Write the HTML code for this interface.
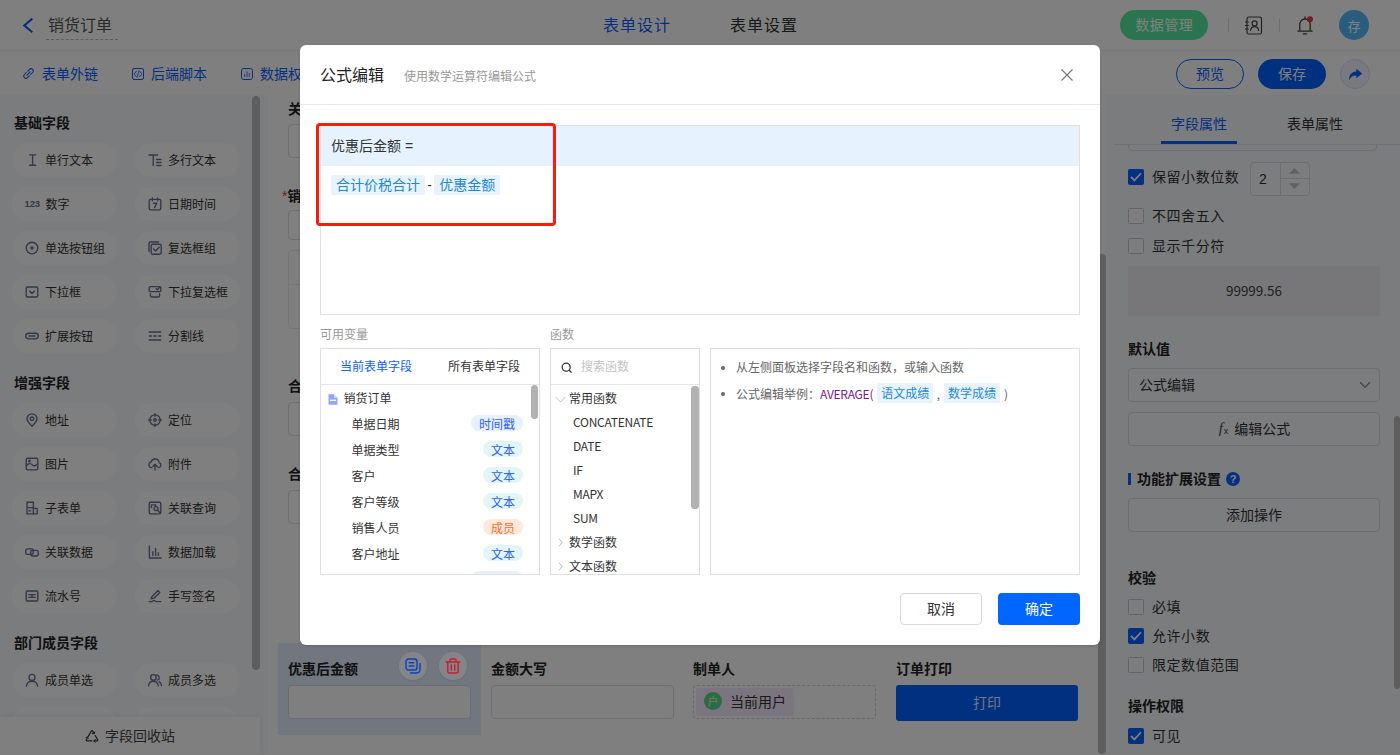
<!DOCTYPE html>
<html lang="zh-CN">
<head>
<meta charset="utf-8">
<title>销货订单 - 表单设计</title>
<style>
*{box-sizing:border-box;margin:0;padding:0}
html,body{width:1400px;height:755px;overflow:hidden}
body{position:relative;font-family:"Liberation Sans","Noto Sans CJK SC",sans-serif;font-size:14px;color:#333;background:#fff}
.a{position:absolute}
.f{display:flex;align-items:center}
.fc{display:flex;align-items:center;justify-content:center}
.u1{padding-bottom:2px}
.u2{padding-bottom:3px}
.nl{font-family:"Noto Sans CJK SC","Liberation Sans",sans-serif}
svg{display:block;overflow:visible}
.b{font-weight:700}
.nw{white-space:nowrap}
/* header */
#hd{left:0;top:0;width:1400px;height:51px;background:#fff;border-bottom:1px solid #f0f0f0}
#tb{left:0;top:51px;width:1400px;height:44px;background:#fff}
.lnk{color:#0b5fff;font-size:14px;height:20px;line-height:20px;white-space:nowrap;top:13px}
/* left */
#lp{left:0;top:95px;width:268px;height:660px;background:#f7f9fc;overflow:hidden}
.st{left:14px;font-weight:700;font-size:14px;color:#222;height:20px;line-height:20px;white-space:nowrap}
.pl{width:105px;height:34px;border-radius:17px;background:#fff;font-size:12px;color:#333;white-space:nowrap;padding-left:13px;padding-bottom:1px;display:flex;align-items:center}
.pl svg{margin-right:6px;flex:none}
.pl svg *{fill:none;stroke:#666e90;stroke-width:1.35;stroke-linecap:round;stroke-linejoin:round}
.c1{left:12px}.c2{left:135px}
/* right */
#rp{left:1106px;top:95px;width:294px;height:660px;background:#f7f9fc;overflow:hidden}
.cb{width:16px;height:16px;border:1px solid #c9c5d8;border-radius:1.500px;background:#fbfbfd;left:22px}
.cb.on{background:#0b5fff;border-color:#0b5fff}
.lb{font-size:14px;color:#333;height:20px;line-height:20px;white-space:nowrap;left:46px;letter-spacing:.55px}
.btn{border:1px solid #dcdde2;border-radius:4px;background:#f9fafc;font-size:14px;color:#333;left:22px;width:252px;height:34px;padding-bottom:3px}
/* modal */
#ov{left:0;top:0;width:1400px;height:755px;background:rgba(0,0,0,.5)}
#md{left:300px;top:45px;width:800px;height:600px;background:#fff;border-radius:6px;overflow:hidden;box-shadow:0 1px 3px rgba(0,0,0,.16)}
.tg{display:inline-block;height:20px;line-height:20px;padding:0 5px;background:#e8f3fd;color:#1e8ad6;border-radius:2px;font-size:14px}
.vr{left:30.500px;font-size:12px;color:#333;height:18px;line-height:18px;white-space:nowrap}
.vt{height:16px;line-height:20px;overflow:hidden;border-radius:8px;font-size:12px;padding:0 8px;right:16px;white-space:nowrap}
.t1{background:#e6f0ff;color:#2e62f5}
.t2{background:#e2f6f6;color:#2e62f5}
.t3{background:#ffe9dd;color:#f2702a}
.fn{font-family:"Noto Sans CJK SC",sans-serif;letter-spacing:-.25px;font-size:12px;color:#333;height:18px;line-height:18px;white-space:nowrap}
</style>
</head>
<body>
<!-- ===== header ===== -->
<div id="hd" class="a">
  <svg class="a" style="left:21px;top:16px" width="14" height="18" viewBox="0 0 14 18"><path d="M11.300 2.600 3.300 9.400l8 6.800" fill="none" stroke="#0b5fff" stroke-width="2.100" stroke-linejoin="miter"/></svg>
  <div class="a nw" style="left:46px;top:12px;width:72px;height:28px;border-bottom:1px dashed #bbb;font-size:16px;line-height:28px;color:#555;padding-left:2px">销货订单</div>
  <div class="a nw" style="left:603px;top:14px;font-size:16px;line-height:24px;letter-spacing:1px;color:#0b5fff">表单设计</div>
  <div class="a nw" style="left:730px;top:14px;font-size:16px;line-height:24px;letter-spacing:1px;color:#333">表单设置</div>
  <div class="a fc nw u1" style="left:1120px;top:10px;width:88px;height:30px;border-radius:15px;background:#55ea9f;color:#fff;font-size:14px;letter-spacing:.5px;padding-left:.5px">数据管理</div>
  <div class="a" style="left:1228px;top:18px;width:1px;height:14px;background:#dcdcdc"></div>
  <!-- contacts icon -->
  <svg class="a" style="left:1243px;top:16px" width="20" height="19" viewBox="0 0 20 19" fill="none" stroke="#444" stroke-width="1.2" stroke-linecap="round" stroke-linejoin="round"><rect x="4" y="1" width="14.5" height="17" rx="1.8"/><path d="M2.400 6h3M2.400 9.500h3M2.400 13h3" stroke-width="1"/><circle cx="11.6" cy="7.4" r="2.5"/><path d="M7.6 14.4c.3-2.4 2-3.8 4-3.8s3.700 1.400 4 3.800"/></svg>
  <div class="a" style="left:1279px;top:18px;width:1px;height:14px;background:#dcdcdc"></div>
  <!-- bell -->
  <svg class="a" style="left:1296px;top:15px" width="18" height="20" viewBox="0 0 18 20" fill="none" stroke="#444" stroke-width="1.3" stroke-linecap="round" stroke-linejoin="round"><path d="M2 16.200h14M3.800 16V9.200a5.200 5.200 0 0 1 10.400 0V16M9 2v2M7.300 18.800h3.400"/><circle cx="14" cy="4.200" r="3" fill="#f0353a" stroke="none"/></svg>
  <div class="a fc" style="left:1339px;top:10px;width:30px;height:30px;border-radius:15px;background:#54b8ff;color:#fff;font-size:13px">存</div>
</div>
<!-- ===== toolbar ===== -->
<div id="tb" class="a">
  <svg class="a" style="left:22px;top:16px" width="13" height="13" viewBox="0 0 13 13" fill="none" stroke="#0b5fff" stroke-width="1" stroke-linecap="round"><g transform="rotate(-45 6.500 6.500)"><path d="M5.600 4.300H2.900a2.200 2.200 0 0 0 0 4.400h2.700M7.400 4.300h2.700a2.200 2.200 0 0 1 0 4.400H7.400M4.200 6.500h4.600"/></g></svg>
  <div class="a lnk" style="left:42px">表单外链</div>
  <svg class="a" style="left:132px;top:17px" width="12" height="12" viewBox="0 0 12 12" fill="none" stroke="#0b5fff" stroke-width=".900" stroke-linecap="round" stroke-linejoin="round"><rect x=".5" y=".500" width="11" height="11" rx="1.600" stroke-width="1"/><path d="M4.300 3.400 2.200 6l2.100 2.600M7.700 3.400 9.800 6 7.700 8.600M6.800 3 5.200 9" stroke-width=".800"/></svg>
  <div class="a lnk" style="left:151px">后端脚本</div>
  <svg class="a" style="left:241px;top:17px" width="12" height="12" viewBox="0 0 12 12" fill="none" stroke="#0b5fff" stroke-width=".900" stroke-linecap="round" stroke-linejoin="round"><rect x=".5" y=".500" width="11" height="11" rx="2.200" stroke-width="1"/><path d="M3.700 8.600V6.400M6 8.600V3.800M8.300 8.600V5.400" stroke-width=".800"/></svg>
  <div class="a lnk" style="left:260px">数据权限</div>
  <div class="a fc nw u1" style="left:1176px;top:8px;width:68px;height:30px;border-radius:15px;border:1px solid #0b5fff;color:#0b5fff;font-size:14px;background:#fff">预览</div>
  <div class="a fc nw u1" style="left:1258px;top:8px;width:68px;height:30px;border-radius:15px;background:#0060ff;color:#fff;font-size:14px">保存</div>
  <div class="a fc" style="left:1340px;top:8px;width:30px;height:30px;border-radius:15px;background:#f1f5ff;border:1px solid #d4e0fb">
    <svg width="15" height="13" viewBox="0 0 15 13"><path d="M8.300.8 14.200 5.600 8.300 10.300V7.400C4.600 7.300 2.400 9 .9 12.200 1 7.400 3.600 3.900 8.300 3.600z" fill="#0b5fff"/></svg>
  </div>
</div>
<!-- ===== left panel ===== -->
<div id="lp" class="a">
  <div class="a st" style="top:18px">基础字段</div>
  <div class="a pl c1" style="top:48px"><svg width="14" height="14" viewBox="0 0 14 14"><path d="M4.600 1.800h6M4.600 12.200h6M7.600 1.800v10.400"/></svg>单行文本</div>
  <div class="a pl c2" style="top:48px"><svg width="14" height="14" viewBox="0 0 14 14"><path d="M1 2h8.500M5.200 2v10.500M8.500 6.500h4.500M8.500 9.500h4.500M8.500 12.500h4.500"/></svg>多行文本</div>
  <div class="a pl c1" style="top:92px"><span style="font:700 9.500px/14px 'Liberation Sans',sans-serif;color:#666e90;width:15px;flex:none;margin-right:6px;letter-spacing:-.1px;margin-left:-.5px">123</span>数字</div>
  <div class="a pl c2" style="top:92px"><svg width="14" height="14" viewBox="0 0 14 14"><rect x="1.200" y="2.400" width="11.600" height="10.400" rx="1.600"/><path d="M4.400 1v2.800M9.600 1v2.800M5.400 6.200h3.400L6.600 10.600"/></svg>日期时间</div>
  <div class="a pl c1" style="top:136px"><svg width="14" height="14" viewBox="0 0 14 14"><circle cx="7" cy="7" r="5.800"/><circle cx="7" cy="7" r="1.100" style="fill:#666e90"/></svg>单选按钮组</div>
  <div class="a pl c2" style="top:136px"><svg width="14" height="14" viewBox="0 0 14 14"><rect x="3.200" y="3.200" width="10" height="10" rx="1.400"/><path d="M1 10.500V2.200A1.200 1.200 0 0 1 2.200 1H10.500M5.600 8l2 2 3.600-3.800"/></svg>复选框组</div>
  <div class="a pl c1" style="top:180px"><svg width="14" height="14" viewBox="0 0 14 14"><rect x="1.200" y="2" width="11.600" height="10" rx="1.400"/><path d="M4.600 6l2.400 2.400L9.400 6"/></svg>下拉框</div>
  <div class="a pl c2" style="top:180px"><svg width="14" height="14" viewBox="0 0 14 14"><rect x="1.200" y="1.600" width="11.600" height="5" rx="1.200"/><path d="M8.200 3.600l1.200 1.200 2.200-2.400M2.400 8.600v1.800a1.600 1.600 0 0 0 1.600 1.600h6a1.600 1.600 0 0 0 1.600-1.600V8.600"/></svg>下拉复选框</div>
  <div class="a pl c1" style="top:224px"><svg width="14" height="14" viewBox="0 0 14 14"><rect x=".8" y="4.200" width="12.400" height="5.600" rx="2.800"/><path d="M4 7h6"/></svg>扩展按钮</div>
  <div class="a pl c2" style="top:224px"><svg width="14" height="14" viewBox="0 0 14 14"><path d="M1.200 3h11.600M1.200 7h2.400M5.800 7h2.400M10.400 7h2.400M1.200 11h11.600"/></svg>分割线</div>
  <div class="a st" style="top:278px">增强字段</div>
  <div class="a pl c1" style="top:308px"><svg width="14" height="14" viewBox="0 0 14 14"><path d="M7 13.200C4 10.400 2 8.200 2 5.800a5 5 0 0 1 10 0c0 2.400-2 4.600-5 7.400z"/><circle cx="7" cy="5.800" r="1.800"/></svg>地址</div>
  <div class="a pl c2" style="top:308px"><svg width="14" height="14" viewBox="0 0 14 14"><circle cx="7" cy="7" r="5.200"/><circle cx="7" cy="7" r="1.300"/><path d="M7 .6v2.600M7 10.800v2.600M.6 7h2.600M10.800 7h2.600"/></svg>定位</div>
  <div class="a pl c1" style="top:352px"><svg width="14" height="14" viewBox="0 0 14 14"><rect x="1.200" y="1.200" width="11.600" height="11.600" rx="1.600"/><path d="M1.400 8.600C4 5.600 6 6.400 7.600 8c1.600 1.400 3.400.6 5-1.400"/><circle cx="4.400" cy="4.200" r=".7"/></svg>图片</div>
  <div class="a pl c2" style="top:352px"><svg width="14" height="14" viewBox="0 0 14 14"><path d="M4 10.600H3.400A2.800 2.800 0 0 1 3 5.100 4.200 4.200 0 0 1 11.200 5.600 2.600 2.600 0 0 1 10.800 10.600H10M7 13V7.400M4.800 9.400 7 7.200l2.200 2.200"/></svg>附件</div>
  <div class="a pl c1" style="top:396px"><svg width="14" height="14" viewBox="0 0 14 14"><path d="M2 1.200h6.400v11.600H2zM2 6.600h6.400M8.400 7.400h3.800v5.400H8.400M3.800 9.800h2"/></svg>子表单</div>
  <div class="a pl c2" style="top:396px"><svg width="14" height="14" viewBox="0 0 14 14"><rect x="1.200" y="1.200" width="11.600" height="11.600" rx="1.400"/><path d="M3.400 6.600V3.800h4.200V5"/><circle cx="8" cy="7.600" r="2"/><path d="M9.500 9.100 11.600 11.200"/></svg>关联查询</div>
  <div class="a pl c1" style="top:440px"><svg width="14" height="14" viewBox="0 0 14 14"><rect x=".8" y="3.800" width="7.400" height="5.600" rx="1.400"/><rect x="5.800" y="5.400" width="7.400" height="5.600" rx="1.400"/></svg>关联数据</div>
  <div class="a pl c2" style="top:440px"><svg width="14" height="14" viewBox="0 0 14 14"><path d="M1.400 1v12h11.800M4.800 10.600V6.600M7.600 10.600V3.400M10.400 10.600V7.600"/></svg>数据加载</div>
  <div class="a pl c1" style="top:484px"><svg width="14" height="14" viewBox="0 0 14 14"><rect x="1.200" y="2" width="11.600" height="10" rx="1"/><path d="M3.800 5.600h6.400M3.800 8.400h6.400M7 5.600v2.800"/></svg>流水号</div>
  <div class="a pl c2" style="top:484px"><svg width="14" height="14" viewBox="0 0 14 14"><path d="M3.200 9.800 4 7.400 10 1.600l1.800 1.800-5.800 5.800zM1 12.600h3c1.200-1.200 2.600-1.400 3.800 0h5"/></svg>手写签名</div>
  <div class="a st" style="top:538px">部门成员字段</div>
  <div class="a pl c1" style="top:568px"><svg width="14" height="14" viewBox="0 0 14 14"><circle cx="7" cy="4.400" r="3"/><path d="M1.400 13.200c.4-3.400 2.800-5 5.600-5s5.200 1.600 5.600 5"/></svg>成员单选</div>
  <div class="a pl c2" style="top:568px"><svg width="14" height="14" viewBox="0 0 14 14"><circle cx="5.400" cy="4.400" r="2.800"/><path d="M.6 12.800c.3-3 2.300-4.600 4.800-4.600s4.500 1.600 4.800 4.600M8.800 1.800a2.800 2.800 0 0 1 .6 5.400M11 8.600c1.400.6 2.300 2 2.500 4"/></svg>成员多选</div>
  <div class="a pl c1" style="top:612px"></div>
  <div class="a pl c2" style="top:612px"></div>
  <div class="a" style="left:252px;top:1px;width:8px;height:574px;border-radius:4px;background:#bdbdbd"></div>
  <div class="a fc nw u1" style="left:0;top:622px;width:260px;height:38px;background:#fefefe;box-shadow:0 -2px 6px rgba(0,0,0,.06);font-size:14px;color:#444">
    <svg width="14" height="13" viewBox="0 0 14 13" fill="none" stroke="#333" stroke-width="1.150" stroke-linecap="round" stroke-linejoin="round" style="margin-right:6px"><path d="M3.200 7.400 6.300 2.100Q7 1 7.700 2.100L9.100 4.500M10.200 6.500l2.400 4.100Q13.300 11.900 11.900 11.900H9M6.800 11.900H2.100Q.7 11.900 1.400 10.600L2.200 9.200"/><path d="M7.300 4.400l1.900.3.500-1.800M10.300 10.500 8.900 11.900l1.400 1.300M.9 8.400l1.700-.6.600 1.700" stroke-width="1"/></svg>字段回收站</div>
</div>
<!-- ===== canvas ===== -->
<div id="cv" class="a" style="left:268px;top:95px;width:830px;height:660px;background:#fff;overflow:hidden">
  <div class="a b nw" style="left:20px;top:4px;font-size:14px;line-height:20px;color:#222">关联报价单</div>
  <div class="a" style="left:20px;top:29px;width:386px;height:34px;border:1px solid #dcdfe6;border-radius:4px"></div>
  <div class="a b nw" style="left:14px;top:91px;font-size:14px;line-height:20px;color:#222"><span style="color:#f0353a;font-weight:400">*</span>销货明细</div>
  <div class="a" style="left:20px;top:115px;width:100px;height:30px;border:1px solid #dcdfe6;border-radius:4px"></div>
  <div class="a" style="left:20px;top:155px;width:790px;height:79px;border:1px solid #e8eaee;border-radius:4px"></div>
  <div class="a" style="left:20px;top:189px;width:790px;height:1px;background:#e8eaee"></div>
  <div class="a b nw" style="left:20px;top:281px;font-size:14px;line-height:20px;color:#222">合计数量</div>
  <div class="a" style="left:20px;top:307px;width:183px;height:34px;border:1px solid #dcdfe6;border-radius:4px"></div>
  <div class="a b nw" style="left:20px;top:369px;font-size:14px;line-height:20px;color:#222">合计价税合计</div>
  <div class="a" style="left:20px;top:395px;width:183px;height:34px;border:1px solid #dcdfe6;border-radius:4px"></div>
  <!-- bottom row -->
  <div class="a" style="left:10px;top:548px;width:203px;height:92px;background:#e4edff"></div>
  <div class="a b nw" style="left:20px;top:564px;font-size:14px;line-height:20px;color:#222">优惠后金额</div>
  <div class="a" style="left:20px;top:590px;width:183px;height:34px;border:1px solid #d4d8e2;border-radius:4px;background:#fff"></div>
  <div class="a b nw" style="left:223px;top:564px;font-size:14px;line-height:20px;color:#222">金额大写</div>
  <div class="a" style="left:223px;top:590px;width:183px;height:34px;border:1px solid #dcdfe6;border-radius:4px;background:#fff"></div>
  <div class="a b nw" style="left:425px;top:564px;font-size:14px;line-height:20px;color:#222">制单人</div>
  <div class="a" style="left:425px;top:590px;width:183px;height:34px;border:1px dashed #d0d0d0;border-radius:4px"></div>
  <div class="a f nw u1" style="left:428px;top:593px;width:98px;height:28px;border-radius:3px;background:#f4eafc;font-size:14px;color:#333;padding-left:8px">
    <span class="fc" style="width:18px;height:18px;border-radius:9px;background:#55d88a;color:#e8f5c8;font-size:11px;margin-right:8px">户</span>当前用户</div>
  <div class="a b nw" style="left:628px;top:564px;font-size:14px;line-height:20px;color:#222">订单打印</div>
  <div class="a fc nw u1" style="left:628px;top:590px;width:182px;height:36px;border-radius:3px;background:#0060ff;color:#e4edff;font-size:14px">打印</div>
</div>
<!-- canvas scrollbar -->
<div class="a" style="left:1098px;top:95px;width:8px;height:660px;background:#fcfcfc"></div>
<div class="a" style="left:1098px;top:254px;width:8px;height:500px;border-radius:4px;background:#bdbdbd"></div>
<!-- ===== right panel ===== -->
<div id="rp" class="a">
  <div class="a nw" style="left:65px;top:19px;font-size:14px;line-height:20px;color:#0b5fff">字段属性</div>
  <div class="a nw" style="left:181px;top:19px;font-size:14px;line-height:20px;color:#333">表单属性</div>
  <div class="a" style="left:8px;top:49px;width:286px;height:1px;background:#e3e5ea"></div>
  <div class="a" style="left:55px;top:46px;width:76px;height:3px;background:#0b5fff"></div>
  <div class="a" style="left:0;top:50px;width:294px;height:610px;overflow:hidden">
   <div class="a" style="left:0;top:-50px;width:294px;height:660px">
    <div class="a" style="left:22px;top:24px;width:249px;height:32px;border:1px solid #dcdde2;border-radius:4px;background:#f9fafc"></div>
    <div class="a cb on" style="top:74px"><svg width="14" height="14" viewBox="0 0 14 14"><path d="M2 6.800 5.400 10.400 12 3.200" fill="none" stroke="#fff" stroke-width="1.700"/></svg></div>
    <div class="a lb" style="top:72px">保留小数位数</div>
    <div class="a" style="left:144px;top:67px;width:60px;height:34px;border:1px solid #dcdde2;border-radius:4px;background:#f9fafc">
      <div class="a" style="left:29px;top:0;width:1px;height:32px;background:#dcdde2"></div>
      <div class="a" style="left:30px;top:15px;width:28px;height:1px;background:#dcdde2"></div>
      <div class="a" style="left:8px;top:6px;font-size:14px;line-height:20px;color:#333">2</div>
      <svg class="a" style="left:38px;top:4px" width="11" height="7" viewBox="0 0 10 6"><path d="M0 6 5 .5 10 6z" fill="#c4c4c8"/></svg>
      <svg class="a" style="left:38px;top:20px" width="11" height="7" viewBox="0 0 10 6"><path d="M0 0 5 5.500 10 0z" fill="#c4c4c8"/></svg>
    </div>
    <div class="a cb" style="top:113px"></div>
    <div class="a lb" style="top:111px">不四舍五入</div>
    <div class="a cb" style="top:143px"></div>
    <div class="a lb" style="top:141px">显示千分符</div>
    <div class="a fc" style="left:22px;top:171px;width:252px;height:50px;background:#eeeff2;border-radius:2px;font-size:13.500px;color:#444;padding-bottom:3px;font-family:'Noto Sans CJK SC',sans-serif">99999.56</div>
    <div class="a b nw" style="left:22px;top:244px;font-size:14px;line-height:20px;color:#222">默认值</div>
    <div class="a btn f" style="top:273px;padding-left:10px">公式编辑
      <svg class="a" style="left:230px;top:12px" width="12" height="8" viewBox="0 0 12 8"><path d="M1 1.200 6 6.400 11 1.200" fill="none" stroke="#777" stroke-width="1.100"/></svg>
    </div>
    <div class="a btn fc" style="top:317px;padding-left:1px"><span style="font:italic 15px/20px 'Liberation Serif',serif;color:#444;margin-right:1px">f</span><span style="font-size:9px;color:#444;margin:6px 6px 0 0">x</span>编辑公式</div>
    <div class="a" style="left:22px;top:378px;width:3px;height:12px;background:#0b5fff"></div>
    <div class="a b nw" style="left:31px;top:374px;font-size:14px;line-height:20px;color:#222">功能扩展设置</div>
    <div class="a fc b" style="left:120px;top:377px;width:14px;height:14px;border-radius:7px;background:#0b5fff;color:#fff;font-size:11px;font-family:'Liberation Sans',sans-serif">?</div>
    <div class="a btn fc" style="top:403px">添加操作</div>
    <div class="a b nw" style="left:22px;top:473px;font-size:14px;line-height:20px;color:#222">校验</div>
    <div class="a cb" style="top:504px"></div>
    <div class="a lb" style="top:502px">必填</div>
    <div class="a cb on" style="top:533px"><svg width="14" height="14" viewBox="0 0 14 14"><path d="M2 6.800 5.400 10.400 12 3.200" fill="none" stroke="#fff" stroke-width="1.700"/></svg></div>
    <div class="a lb" style="top:531px">允许小数</div>
    <div class="a cb" style="top:562px"></div>
    <div class="a lb" style="top:560px">限定数值范围</div>
    <div class="a b nw" style="left:22px;top:601px;font-size:14px;line-height:20px;color:#222">操作权限</div>
    <div class="a cb on" style="top:633px"><svg width="14" height="14" viewBox="0 0 14 14"><path d="M2 6.800 5.400 10.400 12 3.200" fill="none" stroke="#fff" stroke-width="1.700"/></svg></div>
    <div class="a lb" style="top:631px">可见</div>
   </div>
  </div>
  <div class="a" style="left:288px;top:321px;width:6px;height:273px;border-radius:3px;background:#bdbdbd"></div>
</div>
<!-- ===== overlay + modal ===== -->
<div id="ov" class="a"></div>
<div class="a fc" style="left:399px;top:652px;width:28px;height:28px;border-radius:14px;background:#84858a;box-shadow:0 1px 3px rgba(0,0,0,.06)">
  <svg width="16" height="16" viewBox="0 0 16 16" fill="none" stroke="#0842c6" stroke-width="1.400" stroke-linecap="round" stroke-linejoin="round"><rect x="1" y="1" width="11" height="11" rx="2.600"/><path d="M4.200 4.800h4.600M4.200 8h4.600M15 5.400v6.200a3.400 3.400 0 0 1-3.400 3.400H5.600"/></svg>
</div>
<div class="a fc" style="left:439px;top:652px;width:28px;height:28px;border-radius:14px;background:#84858a;box-shadow:0 1px 3px rgba(0,0,0,.06)">
  <svg width="16" height="16" viewBox="0 0 16 16" fill="none" stroke="#c81d2c" stroke-width="1.400" stroke-linecap="round" stroke-linejoin="round"><path d="M1 4h14M5 3.800V2.200A1.200 1.200 0 0 1 6.200 1h3.600A1.200 1.200 0 0 1 11 2.200v1.600M2.800 4.200v9.200A1.600 1.600 0 0 0 4.400 15h7.200a1.600 1.600 0 0 0 1.600-1.600V4.200M6.300 7v5M9.700 7v5"/></svg>
</div>
<div id="md" class="a">
  <div class="a nw" style="left:20px;top:19px;font-size:16px;line-height:24px;color:#222">公式编辑</div>
  <div class="a nw" style="left:104px;top:23px;font-size:12px;line-height:18px;color:#999">使用数学运算符编辑公式</div>
  <svg class="a" style="left:761px;top:24px" width="12" height="12" viewBox="0 0 12 12"><path d="M.5.500l11 11M11.500.500l-11 11" fill="none" stroke="#777" stroke-width="1.100"/></svg>
  <div class="a" style="left:0;top:59px;width:800px;height:1px;background:#e9e9e9"></div>
  <!-- editor -->
  <div class="a" style="left:20px;top:80px;width:760px;height:190px;border:1px solid #e0e0e0">
    <div class="a nw" style="left:0;top:0;width:758px;height:40px;background:#e6f3ff;font-size:14px;line-height:40px;color:#333;padding-left:10px">优惠后金额 =</div>
    <div class="a nw" style="left:10px;top:49px;height:20px;font-size:14px;line-height:20px;color:#333"><span class="tg">合计价税合计</span><span style="margin:0 2.300px">-</span><span class="tg">优惠金额</span></div>
  </div>
  <div class="a" style="left:16px;top:78px;width:240px;height:103px;border:3px solid #fb1a10;border-radius:4px"></div>
  <div class="a nw" style="left:20px;top:281px;font-size:12px;line-height:18px;color:#999">可用变量</div>
  <div class="a nw" style="left:250px;top:281px;font-size:12px;line-height:18px;color:#999">函数</div>
  <!-- variables -->
  <div class="a" style="left:20px;top:303px;width:220px;height:227px;border:1px solid #e0e0e0;overflow:hidden">
    <div class="a nw" style="left:19px;top:9px;font-size:12px;line-height:18px;color:#0b5fff">当前表单字段</div>
    <div class="a nw" style="left:127px;top:9px;font-size:12px;line-height:18px;color:#333">所有表单字段</div>
    <div class="a" style="left:0;top:35px;width:218px;height:1px;background:#e6e6e6"></div>
    <svg class="a" style="left:7px;top:45px" width="10" height="11" viewBox="0 0 10 11"><path d="M.5.300h5.500L9.500 3.800v6.900H.5z" fill="#93a6ff"/><path d="M6 .300v3.500h3.500z" fill="#d3dcff"/><path d="M2 6.300h6" stroke="#fff" stroke-width="1.300"/></svg>
    <div class="a vr" style="left:22.500px;top:41px">销货订单</div>
    <div class="a vr" style="top:67px">单据日期</div><div class="a vt t1" style="top:66px">时间戳</div>
    <div class="a vr" style="top:93px">单据类型</div><div class="a vt t2" style="top:92px">文本</div>
    <div class="a vr" style="top:119px">客户</div><div class="a vt t2" style="top:118px">文本</div>
    <div class="a vr" style="top:145px">客户等级</div><div class="a vt t2" style="top:144px">文本</div>
    <div class="a vr" style="top:171px">销售人员</div><div class="a vt t3" style="top:170px">成员</div>
    <div class="a vr" style="top:197px">客户地址</div><div class="a vt t2" style="top:196px">文本</div>
    <div class="a vt t1" style="top:222px">时间戳</div>
    <div class="a" style="left:210px;top:36px;width:7px;height:34px;border-radius:3.500px;background:#b2b2b2"></div>
  </div>
  <!-- functions -->
  <div class="a" style="left:250px;top:303px;width:150px;height:227px;border:1px solid #e0e0e0;overflow:hidden">
    <svg class="a" style="left:10px;top:13px" width="12" height="12" viewBox="0 0 12 12" fill="none" stroke="#333" stroke-width="1.300"><circle cx="5.200" cy="5.200" r="4"/><path d="M8.200 8.200 10.600 10.600"/></svg>
    <div class="a nw" style="left:30px;top:9px;font-size:12px;line-height:18px;color:#c4c4c4">搜索函数</div>
    <div class="a" style="left:0;top:35px;width:148px;height:1px;background:#e6e6e6"></div>
    <svg class="a" style="left:4px;top:47px" width="11" height="7" viewBox="0 0 11 7"><path d="M.5.800 5.500 6 10.500.800" fill="none" stroke="#bfc3cb" stroke-width="1"/></svg>
    <div class="a fn" style="left:18px;top:40px;letter-spacing:0">常用函数</div>
    <div class="a fn" style="left:22px;top:64px">CONCATENATE</div>
    <div class="a fn" style="left:22px;top:88px">DATE</div>
    <div class="a fn" style="left:22px;top:112px">IF</div>
    <div class="a fn" style="left:22px;top:136px">MAPX</div>
    <div class="a fn" style="left:22px;top:160px">SUM</div>
    <svg class="a" style="left:7px;top:189px" width="5" height="9" viewBox="0 0 5 9"><path d="M.8.500 4.200 4.500.8 8.500" fill="none" stroke="#bfc3cb" stroke-width="1"/></svg>
    <div class="a fn" style="left:18px;top:184px;letter-spacing:0">数学函数</div>
    <svg class="a" style="left:7px;top:213px" width="5" height="9" viewBox="0 0 5 9"><path d="M.8.500 4.200 4.500.8 8.500" fill="none" stroke="#bfc3cb" stroke-width="1"/></svg>
    <div class="a fn" style="left:18px;top:208px;letter-spacing:0">文本函数</div>
    <div class="a" style="left:140px;top:37px;width:7.500px;height:123px;border-radius:3.500px;background:#b2b2b2"></div>
  </div>
  <!-- help -->
  <div class="a" style="left:410px;top:303px;width:370px;height:227px;border:1px solid #e0e0e0">
    <div class="a" style="left:10px;top:17px;width:4px;height:4px;border-radius:2px;background:#666"></div>
    <div class="a nw" style="left:25px;top:10px;font-size:12px;line-height:18px;color:#666">从左侧面板选择字段名和函数，或输入函数</div>
    <div class="a" style="left:10px;top:43px;width:4px;height:4px;border-radius:2px;background:#666"></div>
    <div class="a nw f nl" style="left:25px;top:34px;height:20px;font-size:12px;color:#666">公式编辑举例：<span style="color:#7b1a8c;letter-spacing:-.25px">AVERAGE(</span><span class="tg" style="font-size:12px;padding:0 4px;margin:0 3.500px 0 4px">语文成绩</span>,<span class="tg" style="font-size:12px;padding:0 4px;margin:0 4px 0 4px">数学成绩</span>)</div>
  </div>
  <div class="a fc nw u1" style="left:600px;top:548px;width:82px;height:32px;border:1px solid #d9d9d9;border-radius:4px;font-size:14px;color:#333;background:#fff">取消</div>
  <div class="a fc nw u1" style="left:698px;top:548px;width:82px;height:32px;border-radius:4px;font-size:14px;color:#fff;background:#0066ff">确定</div>
</div>
</body>
</html>
